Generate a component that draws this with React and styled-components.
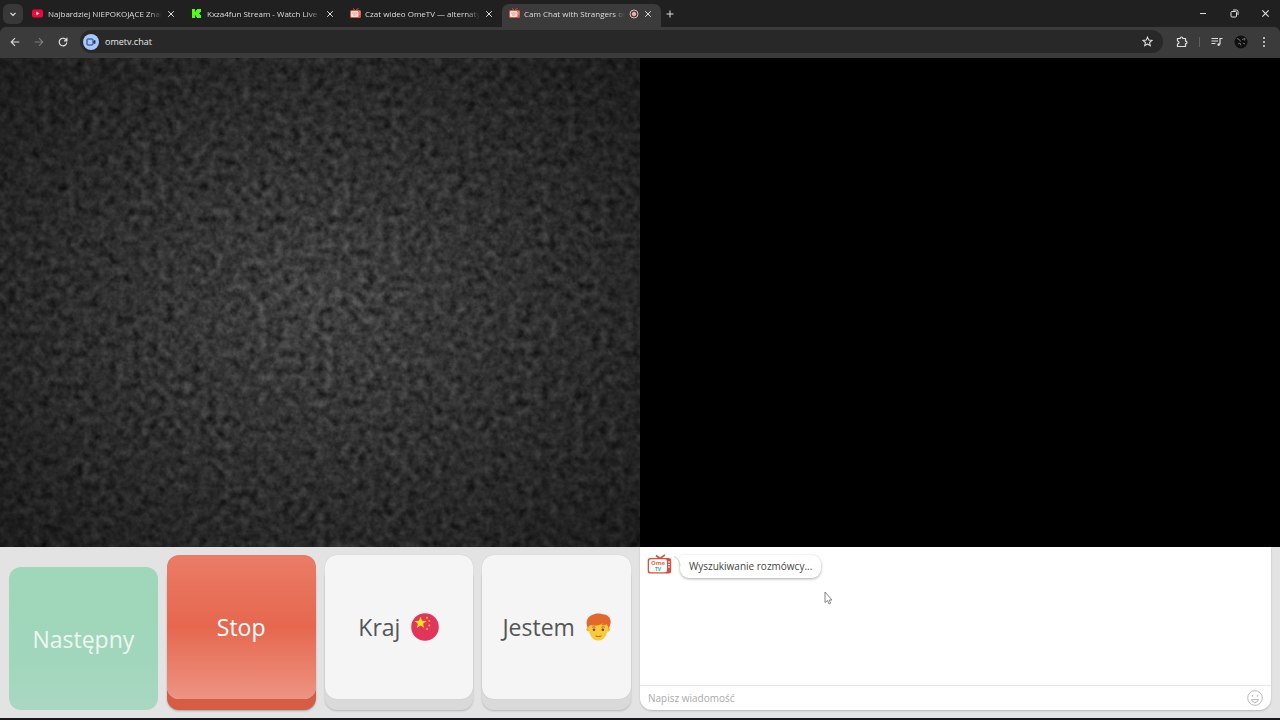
import React, {useState} from 'react'
import styled, {createGlobalStyle} from 'styled-components'

const GlobalStyle = createGlobalStyle`
  * { box-sizing: border-box; }
  body { margin: 0; background: #000; font-family: "Open Sans", "Noto Sans", sans-serif; }
  button, input { font-family: inherit; padding: 0; border: 0; background: none; }
`;

const Page = styled.div`
  display: flex;
  flex-direction: column;
  height: 100vh;
  overflow: hidden;
  background: #202020;
`;

const TabBar = styled.header`
  display: flex;
  align-items: center;
  height: 27px;
  padding-left: 3px;
  color: #dedede;
`;

const TabSearch = styled.button`
  display: grid;
  place-items: center;
  width: 20px;
  height: 20px;
  margin-right: 2px;
  border-radius: 6px;
  background: #383838;
  color: #e8e8e8;
`;

const Tab = styled.div`
  display: flex;
  align-items: center;
  align-self: flex-end;
  width: 159px;
  height: 23px;
  padding: 0 8px 4px 7px;
  gap: 4px;
  border-radius: 7px 7px 0 0;
  background: ${props => props.$active ? "#3b3b3b" : "transparent"};
`;

const TabTitle = styled.span`
  flex: 1;
  min-width: 0;
  overflow: hidden;
  white-space: nowrap;
  font-size: 8px;
  line-height: 14px;
  mask-image: linear-gradient(to right, #000 88%, transparent);
`;

const IconButton = styled.button`
  display: grid;
  place-items: center;
  flex: none;
  width: ${props => props.$size || 12}px;
  height: ${props => props.$size || 12}px;
  color: ${props => props.$color || "#dedede"};
`;

const WindowButtons = styled.div`
  display: flex;
  align-items: center;
  gap: 19px;
  margin-left: auto;
  padding-right: 9px;
`;

const Toolbar = styled.nav`
  display: flex;
  align-items: center;
  height: 31px;
  padding: 0 10px 2px 9px;
  border-radius: 6px 6px 0 0;
  background: #3b3b3b;
`;

const NavButtons = styled.div`
  display: flex;
  gap: 12px;
  margin-right: 11px;
`;

const AddressBar = styled.label`
  display: flex;
  align-items: center;
  flex: 1;
  height: 23px;
  padding: 0 10px 0 3px;
  gap: 6px;
  border-radius: 12px;
  background: #282828;
`;

const SiteBadge = styled.span`
  display: grid;
  place-items: center;
  width: 16px;
  height: 16px;
  border-radius: 50%;
  background: #a8c7fa;
`;

const AddressInput = styled.input`
  flex: 1;
  min-width: 0;
  outline: 0;
  color: #e8e8e8;
  font-size: 9px;
  line-height: 14px;
`;

const ToolbarRight = styled.div`
  display: flex;
  align-items: center;
  gap: 10px;
  margin-left: 12px;
`;

const Divider = styled.span`
  width: 1px;
  height: 10px;
  background: #606060;
`;

const Screens = styled.main`
  display: grid;
  grid-template-columns: 1fr 1fr;
  flex: 1;
  min-height: 0;
  background: #000;
`;

const NoiseScreen = styled.section`
  position: relative;
  overflow: hidden;
  background: #2c2c2c;

  svg {
    position: absolute;
    inset: 0;
    width: 100%;
    height: 100%;
  }
`;

const Bottom = styled.footer`
  display: grid;
  grid-template-columns: 1fr 1fr;
  height: 173px;
  background: #e3e3e3;
  border-bottom: 2px solid #17171b;
`;

const Controls = styled.div`
  display: grid;
  grid-template-columns: repeat(4, 1fr);
  gap: 9px;
  padding: 8px 9px;
`;

const faces = {
    next: "linear-gradient(#9fd7ba, #a0d6bb 60%, #aad7c2)",
    stop: "linear-gradient(#ea7c67, #e6674e 50%, #ed9483)",
    plain: "#f5f5f5",
};

const shadows = {
    next: "none",
    stop: "0 11px 0 #d65c43, 0 12px 2px #0004",
    plain: "0 0 1px #0003, 0 11px 0 #dadada, 0 12px 2px #0003",
};

const labels = {
    next: "#eef8f2",
    stop: "#fff",
    plain: "#555",
};

const BigButton = styled.button`
  display: flex;
  align-items: center;
  justify-content: center;
  gap: 11px;
  min-width: 0;
  margin: ${props => props.$kind === "next" ? "12px 0 0" : "0 0 11px"};
  border-radius: 12px;
  background: ${props => faces[props.$kind]};
  box-shadow: ${props => shadows[props.$kind]};
  color: ${props => labels[props.$kind]};
  font-size: 23px;
  line-height: 32px;
`;

const Chat = styled.section`
  display: flex;
  flex-direction: column;
  margin: 0 9px 8px 0;
  border-radius: 0 0 12px 12px;
  background: #fff;
  box-shadow: 0 1px 2px #0003;
`;

const Messages = styled.div`
  display: flex;
  align-items: flex-start;
  flex: 1;
  gap: 8px;
  padding: 7px;
`;

const Bubble = styled.p`
  position: relative;
  margin: 1px 0 0;
  padding: 3px 9px 4px;
  border-radius: 3px 9px 9px 9px;
  background: #fff;
  box-shadow: 0 1px 3px #0005;
  color: #444;
  font-size: 10px;
  line-height: 16px;
`;

const BubbleTail = styled.svg`
  position: absolute;
  left: -7px;
  top: 0;
`;

const MessageRow = styled.form`
  display: flex;
  align-items: center;
  height: 25px;
  padding: 0 8px;
  border-top: 1px solid #e6e6e6;
`;

const MessageInput = styled.input`
  flex: 1;
  outline: 0;
  font-size: 10px;
  line-height: 16px;
  color: #444;

  &::placeholder { color: #aaa; opacity: 1; }
`;

const Cursor = styled.svg`
  position: absolute;
  left: 824px;
  top: 591px;
`;

const YoutubeIcon = () => (
    <svg width="12" height="11" viewBox="0 0 12 11">
        <rect x="0" y="1.5" width="11" height="8" rx="2" fill="#f0083c"/>
        <path d="M4.4 3.7v3.6l3-1.8z" fill="#fff"/>
    </svg>
)

const KickIcon = () => (
    <svg width="12" height="11" viewBox="0 0 12 11">
        <path d="M1 1h3v2.500h1V2h1V1h4v3H9v1H8v1h1v1h1v3H6V9H5V7.500H4V10H1z" fill="#53fc18"/>
    </svg>
)

const TvFavicon = () => (
    <svg width="11" height="11" viewBox="0 0 11 11">
        <path d="M3 .5l2.500 2L8.500.3" stroke="#dd5144" fill="none"/>
        <rect y="2" width="11" height="8" rx="1.500" fill="#dd5144"/>
        <rect x="1" y="3" width="7.500" height="6" rx="1" fill="#f6e9e6"/>
        <path d="M2 5h5.500M3 7h3.500" stroke="#dd9388"/>
        <path d="M9.800 3.500v4" stroke="#f6d5d0" strokeDasharray="1 1"/>
    </svg>
)

const CloseIcon = ({size = 8}) => (
    <svg width={size} height={size} viewBox="0 0 8 8" fill="none" stroke="currentColor">
        <path d="M1.200 1.200l5.600 5.600M6.800 1.200L1.200 6.800"/>
    </svg>
)

const OmeLogo = () => (
    <svg width="25" height="21" viewBox="0 0 25 21">
        <path d="M9 1.500l4 3L18 .8" fill="none" stroke="#d5503f" strokeWidth="1.600"/>
        <rect x=".7" y="4" width="23.500" height="15.500" rx="2.500" fill="#d5503f"/>
        <rect x="2" y="5.200" width="18" height="13" rx="2" fill="#fff"/>
        <path d="M21 8h2M21 10.500h2M21 13h2" stroke="#fff"/>
        <text x="11" y="11.300" textAnchor="middle" fontFamily="Open Sans, sans-serif" fontWeight="700" fontSize="6" fill="#dc6a50">Ome</text>
        <text x="11" y="17.300" textAnchor="middle" fontFamily="Open Sans, sans-serif" fontWeight="700" fontSize="5" fill="#4da476">TV</text>
    </svg>
)

const ChinaFlag = () => (
    <svg width="28" height="28" viewBox="0 0 28 28">
        <circle cx="14" cy="14" r="13.800" fill="#e2355c"/>
        <path d="M9.500 3.500l1.500 4.300 4.600.1-3.600 2.800 1.300 4.400-3.800-2.600-3.800 2.600L7 10.700 3.400 7.900l4.600-.1z" fill="#ffdf23"/>
        <g fill="#f5b63b">
            <circle cx="16" cy="4.800" r="1"/>
            <circle cx="18.300" cy="8" r="1"/>
            <circle cx="18.300" cy="12.500" r="1"/>
            <circle cx="16" cy="16" r="1"/>
        </g>
    </svg>
)

const BoyIcon = () => (
    <svg width="25" height="28" viewBox="0 0 25 28">
        <circle cx="2.500" cy="16.500" r="2" fill="#f6b52a"/>
        <circle cx="22" cy="16.500" r="2" fill="#f6b52a"/>
        <path d="M2.500 9C2 20 5 27.500 12.200 27.500S22.500 20 22 9z" fill="#fbca3a"/>
        <path d="M2 15.500C-1 9 1 4 6 2c3-2 8-2 10.500-.8C22 1 26 6 24.300 11c-.3 2-1 3.500-2 4.500 0-2-.6-3-1.800-4.200-1.500 1-3.500 1.200-5 .7.800-.5 1.500-1.200 1.800-2C13 12.800 8 13 5 12c-1.500.7-2.600 1.700-3 3.500z" fill="#e2682c"/>
        <circle cx="8" cy="16.800" r="1.300" fill="#69422c"/>
        <circle cx="16.800" cy="16.800" r="1.300" fill="#69422c"/>
        <path d="M6 14.300q2-1.200 3.500 0M15.500 14.300q2-1.200 3.500 0M9.500 23q3 1.300 6 0" fill="none" stroke="#a35d26" strokeWidth=".9"/>
    </svg>
)

const Noise = () => (
    <svg aria-hidden="true">
        <filter id="static" x="0" y="0" width="100%" height="100%" colorInterpolationFilters="sRGB">
            <feTurbulence type="fractalNoise" baseFrequency="0.12" numOctaves="3" seed="7"/>
            <feColorMatrix values=".3 .2 0 0 0  .3 .2 0 0 0  .3 .2 0 0 0  0 0 0 0 1"/>
        </filter>
        <radialGradient id="vignette" cx="50%" cy="50%" r="70%">
            <stop offset="0" stopColor="#000" stopOpacity="0"/>
            <stop offset="1" stopColor="#000" stopOpacity=".55"/>
        </radialGradient>
        <rect width="100%" height="100%" filter="url(#static)"/>
        <rect width="100%" height="100%" fill="url(#vignette)"/>
    </svg>
)

const tabs = [
    {title: "Najbardziej NIEPOKOJĄCE Znal", icon: <YoutubeIcon/>},
    {title: "Kxza4fun Stream - Watch Live o", icon: <KickIcon/>},
    {title: "Czat wideo OmeTV — alternaty", icon: <TvFavicon/>},
    {title: "Cam Chat with Strangers on", icon: <TvFavicon/>, active: true},
];

const App = () => {

    const [address, setAddress] = useState("ometv.chat");
    const [message, setMessage] = useState("");

    return (
        <Page>
            <GlobalStyle/>
            <TabBar>
                <TabSearch aria-label="Search tabs">
                    <svg width="8" height="8" viewBox="0 0 8 8" fill="none" stroke="currentColor" strokeWidth="1.200">
                        <path d="M1.500 2.800L4 5.300l2.500-2.500"/>
                    </svg>
                </TabSearch>
                {tabs.map(tab => (
                    <Tab key={tab.title} $active={tab.active}>
                        {tab.icon}
                        <TabTitle>{tab.title}</TabTitle>
                        {tab.active && <svg width="10" height="10" viewBox="0 0 10 10" fill="none" stroke="#e9b5b1">
                            <circle cx="5" cy="5" r="4"/>
                            <circle cx="5" cy="5" r="1.800" fill="#e9b5b1"/>
                        </svg>}
                        <IconButton $size={10} aria-label="Close tab"><CloseIcon/></IconButton>
                    </Tab>
                ))}
                <IconButton $size={18} aria-label="New tab">
                    <svg width="8" height="8" viewBox="0 0 8 8" stroke="currentColor"><path d="M4 .5v7M.5 4h7"/></svg>
                </IconButton>
                <WindowButtons>
                    <IconButton aria-label="Minimize">
                        <svg width="8" height="8" viewBox="0 0 8 8" stroke="currentColor"><path d="M1 3.500h6"/></svg>
                    </IconButton>
                    <IconButton aria-label="Restore">
                        <svg width="9" height="9" viewBox="0 0 9 9" fill="none" stroke="currentColor">
                            <rect x="1" y="2.500" width="5.500" height="5.500" rx="1"/>
                            <path d="M3 1h3.500Q8 1 8 2.500V6"/>
                        </svg>
                    </IconButton>
                    <IconButton aria-label="Close"><CloseIcon size={9}/></IconButton>
                </WindowButtons>
            </TabBar>
            <Toolbar>
                <NavButtons>
                    <IconButton aria-label="Back">
                        <svg width="10" height="10" viewBox="0 0 10 10" fill="none" stroke="currentColor" strokeWidth="1.100">
                            <path d="M9.300 5H1.200M5 1.200L1.200 5 5 8.800"/>
                        </svg>
                    </IconButton>
                    <IconButton aria-label="Forward" $color="#7d7d7d">
                        <svg width="10" height="10" viewBox="0 0 10 10" fill="none" stroke="currentColor" strokeWidth="1.100">
                            <path d="M.7 5h8.100M5 1.200L8.800 5 5 8.800"/>
                        </svg>
                    </IconButton>
                    <IconButton aria-label="Reload">
                        <svg width="10" height="10" viewBox="0 0 10 10" fill="none" stroke="currentColor" strokeWidth="1.200">
                            <path d="M8.500 3.500A3.800 3.800 0 1 0 8.800 5.500M8.900.8v3H6"/>
                        </svg>
                    </IconButton>
                </NavButtons>
                <AddressBar>
                    <SiteBadge>
                        <svg width="10" height="10" viewBox="0 0 10 10" fill="none" stroke="#163a72">
                            <rect x="1" y="2" width="6" height="6" rx=".8"/>
                            <path d="M7.500 4.500L9 3.500v3L7.500 5.500" fill="#163a72"/>
                        </svg>
                    </SiteBadge>
                    <AddressInput aria-label="Address" value={address} onChange={(e) => setAddress(e.target.value)}/>
                    <IconButton aria-label="Bookmark">
                        <svg width="11" height="11" viewBox="0 0 24 24" fill="none" stroke="currentColor" strokeWidth="2.300">
                            <path d="M12 2.500l2.800 6.500 7 .6-5.300 4.600 1.600 6.900-6.100-3.700-6.100 3.700 1.600-6.900L2.200 9.600l7-.6z"/>
                        </svg>
                    </IconButton>
                </AddressBar>
                <ToolbarRight>
                    <IconButton $size={14} aria-label="Extensions">
                        <svg width="12" height="12" viewBox="0 0 12 12" fill="none" stroke="currentColor" strokeWidth="1.200">
                            <path d="M1.500 2.500h2.700q0-1.500 1.300-1.500t1.300 1.500h2.700v2.700q1.500 0 1.500 1.300T9.500 7.800v2.700h-8V8q1.500-.2 1.500-1.500T1.500 5z"/>
                        </svg>
                    </IconButton>
                    <Divider/>
                    <IconButton $size={14} aria-label="Media">
                        <svg width="12" height="10" viewBox="0 0 12 10" fill="none" stroke="currentColor" strokeWidth="1.200">
                            <path d="M.5 1.500h6.500M.5 4h6.500M.5 6.500h4M9 7.500V1.500h2.500"/>
                            <circle cx="7.700" cy="7.600" r="1.300" fill="currentColor" stroke="none"/>
                        </svg>
                    </IconButton>
                    <IconButton $size={14} aria-label="Profile">
                        <svg width="14" height="14" viewBox="0 0 14 14">
                            <circle cx="7" cy="7" r="6.500" fill="#101010"/>
                            <path d="M3 3.500l2.500 1.200 1 1.800M8 4.500l3-1-.5 2M4 9l2-1 1 2.500M9 8l2 1" fill="none" stroke="#888" strokeWidth=".8"/>
                        </svg>
                    </IconButton>
                    <IconButton aria-label="Menu">
                        <svg width="4" height="12" viewBox="0 0 4 12" fill="currentColor">
                            <circle cx="2" cy="2" r="1"/>
                            <circle cx="2" cy="6" r="1"/>
                            <circle cx="2" cy="10" r="1"/>
                        </svg>
                    </IconButton>
                </ToolbarRight>
            </Toolbar>
            <Screens>
                <NoiseScreen><Noise/></NoiseScreen>
            </Screens>
            <Bottom>
                <Controls>
                    <BigButton $kind="next">Następny</BigButton>
                    <BigButton $kind="stop">Stop</BigButton>
                    <BigButton $kind="plain">Kraj <ChinaFlag/></BigButton>
                    <BigButton $kind="plain">Jestem <BoyIcon/></BigButton>
                </Controls>
                <Chat>
                    <Messages>
                        <OmeLogo/>
                        <Bubble>
                            <BubbleTail width="12" height="12" viewBox="0 0 12 12">
                                <path d="M0 1q5 0 12 0v10H7Q7 4 0 1z" fill="#fff"/>
                                <path d="M1 1.500Q7 4 7 11" fill="none" stroke="#ccc"/>
                            </BubbleTail>
                            Wyszukiwanie rozmówcy...
                        </Bubble>
                    </Messages>
                    <MessageRow onSubmit={(e) => e.preventDefault()}>
                        <MessageInput aria-label="Wiadomość" placeholder="Napisz wiadomość" value={message}
                                      onChange={(e) => setMessage(e.target.value)}/>
                        <IconButton type="button" $size={16} $color="#bbb" aria-label="Emoji">
                            <svg width="16" height="16" viewBox="0 0 16 16" fill="none" stroke="currentColor">
                                <circle cx="8" cy="8" r="7.300"/>
                                <path d="M4.500 9.500h7q-.8 3-3.500 3t-3.500-3z"/>
                                <circle cx="5.500" cy="5.800" r=".9" fill="currentColor" stroke="none"/>
                                <circle cx="10.500" cy="5.800" r=".9" fill="currentColor" stroke="none"/>
                            </svg>
                        </IconButton>
                    </MessageRow>
                </Chat>
            </Bottom>
            <Cursor width="9" height="14" viewBox="0 0 9 14">
                <path d="M1 1v10.500l2.500-2 1.600 3.500 1.600-.8L5.200 9H8z" fill="#fff" stroke="#777" strokeWidth=".9"/>
            </Cursor>
        </Page>
    )
}

export default App
